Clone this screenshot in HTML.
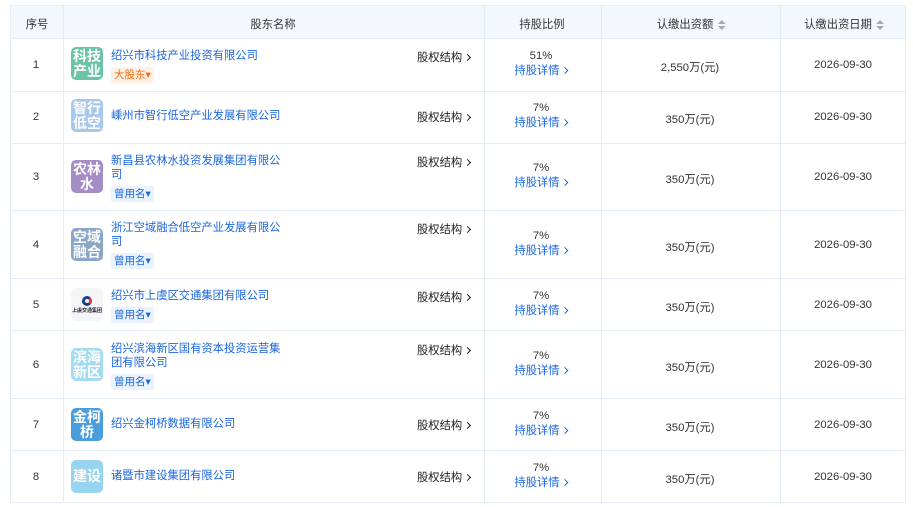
<!DOCTYPE html>
<html><head><meta charset="utf-8"><style>
*{margin:0;padding:0;box-sizing:border-box}
body{width:913px;height:507px;background:#fff;font-family:"Liberation Sans","Noto Sans CJK SC",sans-serif;font-size:11.3px;color:#333;position:relative;overflow:hidden}
.t{position:absolute;left:10px;top:5px;width:896px;height:498px;border:1px solid #e4edf6}
.hd{position:absolute;left:0;top:0;width:100%;height:33px;background:#f2f8fe;border-bottom:1px solid #e4edf6}
.vl{position:absolute;top:0;bottom:0;width:1px;background:#e4edf6}
.hl{position:absolute;left:0;right:0;height:1px;background:#e4edf6}
.c{position:absolute;text-align:center;transform:translateX(-50%);white-space:nowrap}
.logo{position:absolute;left:61px;width:32px;height:33px;border-radius:5px;color:#fff;font-size:14px;font-weight:bold;line-height:15px;text-align:center;display:flex;align-items:center;justify-content:center}
.nm{position:absolute;left:101px;width:172px;color:#1a66e0;line-height:14px;white-space:normal}
.tag{display:inline-block;margin-top:4px;height:16px;line-height:16px;padding:0 3px;font-size:10.5px;background:#eaf3fd;color:#1a66e0;border-radius:2px}
.tag.o{background:#fff0e6;color:#f06a10}
.gq{position:absolute;left:407px;color:#222;white-space:nowrap}
.bl{color:#1a66e0}
.ar{display:inline-block;width:5px;height:5px;border-right:1.5px solid currentColor;border-top:1.5px solid currentColor;transform:rotate(45deg);margin-left:3px;vertical-align:1px}
.s{display:inline-block;vertical-align:middle;margin-left:4px;width:8px;height:10px;position:relative}
.s:before,.s:after{content:"";position:absolute;left:0;border-left:4px solid transparent;border-right:4px solid transparent}
.s:before{top:0;border-bottom:4px solid #aaa}.s:after{bottom:0;border-top:4px solid #aaa}
.r .c,.r .nm,.r .gq{margin-top:1.5px}
.r .c.v{margin-top:2px}
</style></head><body>
<div class="t">
<div class="hd"></div>
<div class="vl" style="left:52px"></div><div class="vl" style="left:473px"></div><div class="vl" style="left:590px"></div><div class="vl" style="left:769px"></div>
<div class="hl" style="top:85px"></div><div class="hl" style="top:137px"></div><div class="hl" style="top:204px"></div><div class="hl" style="top:272px"></div><div class="hl" style="top:324px"></div><div class="hl" style="top:392px"></div><div class="hl" style="top:444px"></div>
<div class="c" style="left:26px;top:10px">序号</div>
<div class="c" style="left:262px;top:10px">股东名称</div>
<div class="c" style="left:531px;top:10px">持股比例</div>
<div class="c" style="left:680px;top:10px">认缴出资额<span class="s"></span></div>
<div class="c" style="left:833px;top:10px">认缴出资日期<span class="s"></span></div>
</div>
<div class="r" style="position:absolute;left:10px;top:5px">
<div class="c v" style="left:26px;top:52px">1</div>
<div class="logo" style="top:42px;background:#6cc4a6">科技<br>产业</div>
<div class="nm" style="top:42px">绍兴市科技产业投资有限公司<br><span class="tag o">大股东▾</span></div>
<div class="gq" style="top:42px">股权结构<span class="ar"></span></div>
<div class="c" style="left:531px;top:43px">51%<br><span class="bl" style="line-height:19px">持股详情<span class="ar"></span></span></div>
<div class="c v" style="left:680px;top:52px">2,550万(元)</div>
<div class="c v" style="left:833px;top:52px">2026-09-30</div>

<div class="c v" style="left:26px;top:104px">2</div>
<div class="logo" style="top:94px;background:#a8c7ec">智行<br>低空</div>
<div class="nm" style="top:102px">嵊州市智行低空产业发展有限公司</div>
<div class="gq" style="top:102px">股权结构<span class="ar"></span></div>
<div class="c" style="left:531px;top:95px">7%<br><span class="bl" style="line-height:19px">持股详情<span class="ar"></span></span></div>
<div class="c v" style="left:680px;top:104px">350万(元)</div>
<div class="c v" style="left:833px;top:104px">2026-09-30</div>

<div class="c v" style="left:26px;top:164px">3</div>
<div class="logo" style="top:155px;background:#a48cc6">农林<br>水</div>
<div class="nm" style="top:147px">新昌县农林水投资发展集团有限公司<br><span class="tag">曾用名▾</span></div>
<div class="gq" style="top:147px">股权结构<span class="ar"></span></div>
<div class="c" style="left:531px;top:155px">7%<br><span class="bl" style="line-height:19px">持股详情<span class="ar"></span></span></div>
<div class="c v" style="left:680px;top:164px">350万(元)</div>
<div class="c v" style="left:833px;top:164px">2026-09-30</div>

<div class="c v" style="left:26px;top:232px">4</div>
<div class="logo" style="top:223px;background:#8aa5c8">空域<br>融合</div>
<div class="nm" style="top:214px">浙江空域融合低空产业发展有限公司<br><span class="tag">曾用名▾</span></div>
<div class="gq" style="top:214px">股权结构<span class="ar"></span></div>
<div class="c" style="left:531px;top:223px">7%<br><span class="bl" style="line-height:19px">持股详情<span class="ar"></span></span></div>
<div class="c v" style="left:680px;top:232px">350万(元)</div>
<div class="c v" style="left:833px;top:232px">2026-09-30</div>

<div class="c v" style="left:26px;top:292px">5</div>
<div class="logo" style="top:283px;background:#f4f5f7;color:#223;font-size:5px;flex-direction:column;line-height:6px"><span style="display:block;width:10px;height:10px;border-radius:50%;border:3px solid #1a3c8a;border-right-color:#d33;margin-bottom:2px"></span>上虞交通集团</div>
<div class="nm" style="top:282px">绍兴市上虞区交通集团有限公司<br><span class="tag">曾用名▾</span></div>
<div class="gq" style="top:282px">股权结构<span class="ar"></span></div>
<div class="c" style="left:531px;top:283px">7%<br><span class="bl" style="line-height:19px">持股详情<span class="ar"></span></span></div>
<div class="c v" style="left:680px;top:292px">350万(元)</div>
<div class="c v" style="left:833px;top:292px">2026-09-30</div>

<div class="c v" style="left:26px;top:352px">6</div>
<div class="logo" style="top:343px;background:#a3dcf0">滨海<br>新区</div>
<div class="nm" style="top:335px">绍兴滨海新区国有资本投资运营集团有限公司<br><span class="tag">曾用名▾</span></div>
<div class="gq" style="top:335px">股权结构<span class="ar"></span></div>
<div class="c" style="left:531px;top:343px">7%<br><span class="bl" style="line-height:19px">持股详情<span class="ar"></span></span></div>
<div class="c v" style="left:680px;top:352px">350万(元)</div>
<div class="c v" style="left:833px;top:352px">2026-09-30</div>

<div class="c v" style="left:26px;top:412px">7</div>
<div class="logo" style="top:403px;background:#4a9edb">金柯<br>桥</div>
<div class="nm" style="top:410px">绍兴金柯桥数据有限公司</div>
<div class="gq" style="top:410px">股权结构<span class="ar"></span></div>
<div class="c" style="left:531px;top:403px">7%<br><span class="bl" style="line-height:19px">持股详情<span class="ar"></span></span></div>
<div class="c v" style="left:680px;top:412px">350万(元)</div>
<div class="c v" style="left:833px;top:412px">2026-09-30</div>

<div class="c v" style="left:26px;top:464px">8</div>
<div class="logo" style="top:455px;background:#98d4f0">建设</div>
<div class="nm" style="top:462px">诸暨市建设集团有限公司</div>
<div class="gq" style="top:462px">股权结构<span class="ar"></span></div>
<div class="c" style="left:531px;top:455px">7%<br><span class="bl" style="line-height:19px">持股详情<span class="ar"></span></span></div>
<div class="c v" style="left:680px;top:464px">350万(元)</div>
<div class="c v" style="left:833px;top:464px">2026-09-30</div>
</div>
</body></html>
